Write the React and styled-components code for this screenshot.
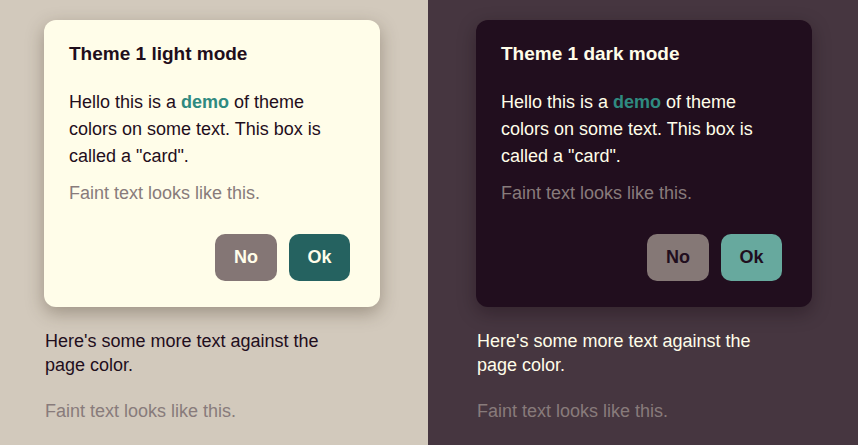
import React from "react";
import styled, { createGlobalStyle } from "styled-components";

const themes = {
  light: {
    page: "#d2c9bc",
    card: "#fffde9",
    text: "#1f0e1c",
    faint: "#887b7b",
    accent: "#2f8a80",
    noBg: "#847675",
    noText: "#fffde9",
    okBg: "#256260",
    okText: "#fffde9",
    shadow: "0 6px 18px rgba(60, 45, 30, 0.35)",
  },
  dark: {
    page: "#463640",
    card: "#210e1e",
    text: "#fffde9",
    faint: "#887b7b",
    accent: "#2f8a80",
    noBg: "#857876",
    noText: "#210e1e",
    okBg: "#67a99e",
    okText: "#210e1e",
    shadow: "0 6px 18px rgba(20, 5, 15, 0.35)",
  },
};

const GlobalStyle = createGlobalStyle`
  html, body {
    margin: 0;
    padding: 0;
  }
  body {
    font-family: "Liberation Sans", Arial, sans-serif;
  }
`;

const Page = styled.div`
  display: grid;
  grid-template-columns: 428px 430px;
  height: 445px;
  overflow: hidden;
`;

const Half = styled.section`
  background: ${(p) => p.$t.page};
  color: ${(p) => p.$t.text};
  padding: 20px 0 0 ${(p) => p.$left}px;
  display: flex;
  flex-direction: column;
`;

const Card = styled.div`
  width: 336px;
  box-sizing: border-box;
  background: ${(p) => p.$t.card};
  color: ${(p) => p.$t.text};
  border-radius: 12px;
  box-shadow: ${(p) => p.$t.shadow};
  padding: 23px 30px 26px 25px;
  display: flex;
  flex-direction: column;
`;

const Title = styled.h2`
  margin: 0;
  font-size: 19px;
  font-weight: bold;
  line-height: 22px;
`;

const Body = styled.p`
  margin: 24px 0 0;
  font-size: 18px;
  line-height: 27px;
`;

const Demo = styled.b`
  color: ${(p) => p.$t.accent};
`;

const Faint = styled.p`
  margin: ${(p) => p.$mt}px 0 0 ${(p) => p.$ml || 0}px;
  font-size: 18px;
  line-height: 27px;
  color: ${(p) => p.$t.faint};
`;

const Actions = styled.div`
  display: flex;
  justify-content: flex-end;
  gap: 12px;
  margin-top: 27px;
`;

const Button = styled.button`
  border: none;
  border-radius: 10px;
  height: 47px;
  width: ${(p) => p.$w}px;
  font-family: inherit;
  font-size: 18px;
  font-weight: bold;
  background: ${(p) => p.$bg};
  color: ${(p) => p.$fg};
  padding: 0;
`;

const PageText = styled.p`
  margin: 22px 0 0 1px;
  width: 310px;
  font-size: 18px;
  line-height: 24px;
`;

const Side = ({ t, mode, left }) => (
  <Half $t={t} $left={left}>
    <Card $t={t}>
      <Title>Theme 1 {mode} mode</Title>
      <Body>
        Hello this is a <Demo $t={t}>demo</Demo> of theme colors on some
        text. This box is called a "card".
      </Body>
      <Faint $t={t} $mt={10}>Faint text looks like this.</Faint>
      <Actions>
        <Button $w={62} $bg={t.noBg} $fg={t.noText}>No</Button>
        <Button $w={61} $bg={t.okBg} $fg={t.okText}>Ok</Button>
      </Actions>
    </Card>
    <PageText>Here's some more text against the page color.</PageText>
    <Faint $t={t} $mt={21} $ml={1}>
      Faint text looks like this.
    </Faint>
  </Half>
);

export default function App() {
  return (
    <>
      <GlobalStyle />
      <Page>
        <Side t={themes.light} mode="light" left={44} />
        <Side t={themes.dark} mode="dark" left={48} />
      </Page>
    </>
  );
}
